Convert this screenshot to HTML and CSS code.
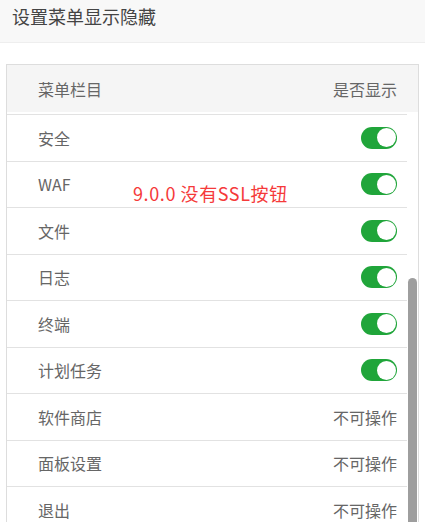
FILE: index.html
```html
<!DOCTYPE html>
<html lang="zh-CN">
<head>
<meta charset="utf-8">
<title>设置菜单显示隐藏</title>
<link rel="stylesheet" href="styles.css">
</head>
<body>
<div class="header">设置菜单显示隐藏</div>
<div class="content">
  <div class="table">
    <div class="thead">
      <span>菜单栏目</span>
      <span>是否显示</span>
    </div>
    <div class="tbody">
      <div class="rows">
        <div class="row"><span>安全</span><span class="switch"><span class="knob"></span></span></div>
        <div class="row"><span>WAF</span><span class="switch"><span class="knob"></span></span></div>
        <div class="row"><span>文件</span><span class="switch"><span class="knob"></span></span></div>
        <div class="row"><span>日志</span><span class="switch"><span class="knob"></span></span></div>
        <div class="row"><span>终端</span><span class="switch"><span class="knob"></span></span></div>
        <div class="row"><span>计划任务</span><span class="switch"><span class="knob"></span></span></div>
        <div class="row"><span>软件商店</span><span class="na">不可操作</span></div>
        <div class="row"><span>面板设置</span><span class="na">不可操作</span></div>
        <div class="row"><span>退出</span><span class="na">不可操作</span></div>
      </div>
      <div class="track"><div class="thumb"></div></div>
    </div>
    <div class="note">9.0.0 没有SSL按钮</div>
  </div>
</div>
</body>
</html>
```
FILE: styles.css
```css
html, body {
  margin: 0;
  padding: 0;
  background: #fff;
  height: 522px;
  overflow: hidden;
  font-family: "Noto Sans CJK SC", "Noto Sans", sans-serif;
}
.header {
  height: 43px;
  box-sizing: border-box;
  background: #f8f8f8;
  border-bottom: 1px solid #eeeeee;
  padding-left: 12px;
  font-size: 18px;
  line-height: 33px;
  color: #444;
}
.content {
  padding: 21px 6px 0 6px;
}
.table {
  position: relative;
  border: 1px solid #dddddd;
  border-bottom: none;
  height: 457px;
  overflow: hidden;
}
.thead {
  height: 47px;
  background: #f5f5f5;
  display: flex;
  align-items: center;
  justify-content: space-between;
  padding: 0 21px 0 31px;
  font-size: 16px;
  color: #666;
}
.tbody {
  display: flex;
  padding-top: 2px;
}
.rows {
  flex: 1;
}
.row {
  height: 46.5px;
  box-sizing: border-box;
  border-top: 1px solid #e2e2e2;
  display: flex;
  align-items: center;
  justify-content: space-between;
  padding: 0 10px 0 31px;
  font-size: 16px;
  color: #666;
}
.switch {
  width: 36px;
  height: 22px;
  border-radius: 11px;
  background: #20a53a;
  display: flex;
  align-items: center;
  justify-content: flex-end;
  padding-right: 1px;
  box-sizing: border-box;
}
.knob {
  width: 19px;
  height: 19px;
  border-radius: 50%;
  background: #fff;
}
.track {
  width: 11px;
}
.thumb {
  margin-top: 164px;
  margin-left: 1px;
  width: 9px;
  height: 300px;
  background: #9e9e9e;
  border-radius: 5px 5px 0 0;
}
.note {
  position: absolute;
  left: 126px;
  top: 116px;
  font-size: 18px;
  line-height: 24px;
  letter-spacing: 0.6px;
  color: #f53a3a;
}
```
